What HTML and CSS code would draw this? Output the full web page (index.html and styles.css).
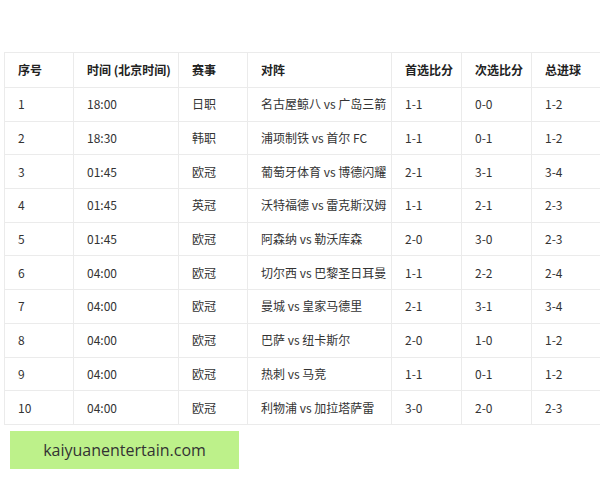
FILE: index.html
```html
<!DOCTYPE html>
<html lang="zh-CN">
<head>
<meta charset="utf-8">
<title>赛程</title>
<link rel="stylesheet" href="styles.css">
</head>
<body>
<div class="page">
  <table class="schedule">
    <colgroup>
      <col class="c-no"><col class="c-time"><col class="c-league"><col class="c-match"><col class="c-s1"><col class="c-s2"><col class="c-goals">
    </colgroup>
    <thead>
      <tr><th>序号</th><th>时间 (北京时间)</th><th>赛事</th><th>对阵</th><th>首选比分</th><th>次选比分</th><th>总进球</th></tr>
    </thead>
    <tbody>
      <tr><td>1</td><td>18:00</td><td>日职</td><td>名古屋鲸八 vs 广岛三箭</td><td>1-1</td><td>0-0</td><td>1-2</td></tr>
      <tr><td>2</td><td>18:30</td><td>韩职</td><td>浦项制铁 vs 首尔 FC</td><td>1-1</td><td>0-1</td><td>1-2</td></tr>
      <tr><td>3</td><td>01:45</td><td>欧冠</td><td>葡萄牙体育 vs 博德闪耀</td><td>2-1</td><td>3-1</td><td>3-4</td></tr>
      <tr><td>4</td><td>01:45</td><td>英冠</td><td>沃特福德 vs 雷克斯汉姆</td><td>1-1</td><td>2-1</td><td>2-3</td></tr>
      <tr><td>5</td><td>01:45</td><td>欧冠</td><td>阿森纳 vs 勒沃库森</td><td>2-0</td><td>3-0</td><td>2-3</td></tr>
      <tr><td>6</td><td>04:00</td><td>欧冠</td><td>切尔西 vs 巴黎圣日耳曼</td><td>1-1</td><td>2-2</td><td>2-4</td></tr>
      <tr><td>7</td><td>04:00</td><td>欧冠</td><td>曼城 vs 皇家马德里</td><td>2-1</td><td>3-1</td><td>3-4</td></tr>
      <tr><td>8</td><td>04:00</td><td>欧冠</td><td>巴萨 vs 纽卡斯尔</td><td>2-0</td><td>1-0</td><td>1-2</td></tr>
      <tr><td>9</td><td>04:00</td><td>欧冠</td><td>热刺 vs 马竞</td><td>1-1</td><td>0-1</td><td>1-2</td></tr>
      <tr><td>10</td><td>04:00</td><td>欧冠</td><td>利物浦 vs 加拉塔萨雷</td><td>3-0</td><td>2-0</td><td>2-3</td></tr>
    </tbody>
  </table>
  <div class="site">kaiyuanentertain.com</div>
</div>
</body>
</html>
```
FILE: styles.css
```css
html, body {
  margin: 0;
  padding: 0;
  background: #ffffff;
}
.page {
  padding: 52px 0 0 4px;
  font-family: "Noto Sans CJK SC", "Noto Sans", sans-serif;
  color: #333333;
}
.schedule {
  border-collapse: collapse;
  table-layout: fixed;
  width: 597px;
  font-size: 12px;
}
.c-no { width: 69px; }
.c-time { width: 105px; }
.c-league { width: 69px; }
.c-match { width: 144px; }
.c-s1 { width: 70px; }
.c-s2 { width: 70px; }
.c-goals { width: 70px; }
.schedule th,
.schedule td {
  border: 1px solid #ebebeb;
  padding: 0 0 0 13px;
  text-align: left;
  white-space: nowrap;
  line-height: 16px;
}
.schedule th {
  height: 34px;
  font-weight: bold;
  color: #222222;
}
.schedule td {
  height: 32.7px;
  font-weight: normal;
}
.site {
  margin: 6px 0 0 6px;
  width: 229px;
  height: 38px;
  background: #bdf18a;
  display: flex;
  align-items: center;
  justify-content: center;
  font-family: "Open Sans", "Liberation Sans", sans-serif;
  font-size: 16px;
  color: #333333;
}
```
